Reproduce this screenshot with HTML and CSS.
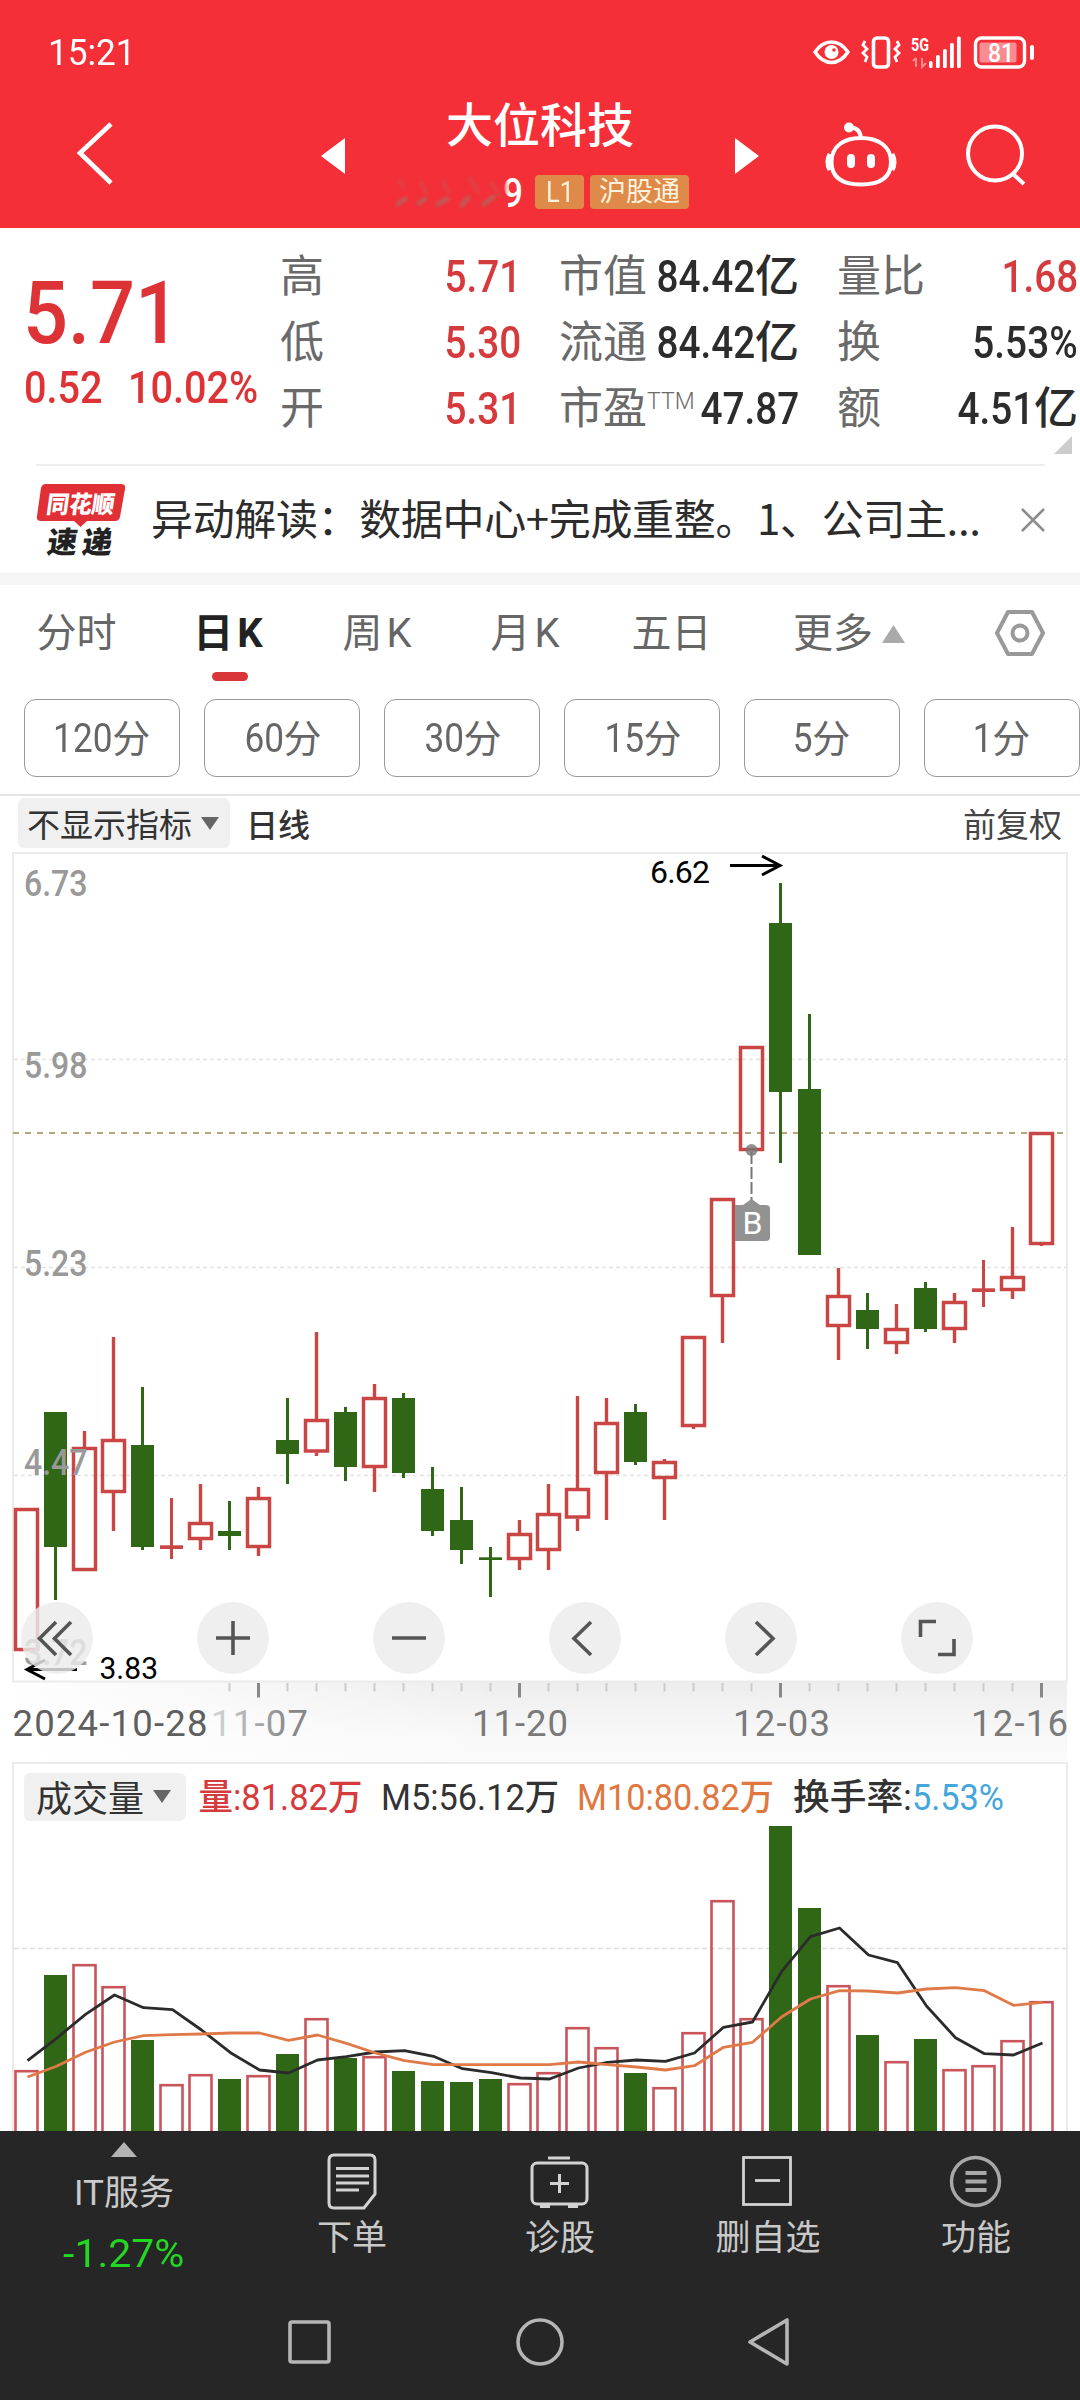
FILE: index.html
```html
<!DOCTYPE html>
<html lang="zh-CN">
<head>
<meta charset="utf-8">
<title>大位科技</title>
<link rel="stylesheet" href="styles.css">
</head>
<body>
<div class="phone">
  <header class="head">
    <div class="status">
      <span class="clock n">15:21</span>
      <svg class="status-icons" width="224" height="40" viewBox="812 32 224 40">
        <g fill="none" stroke="#fff" stroke-width="3.6">
          <path d="M815 52Q822 42 831.500 42T848 52Q841 62.500 831.500 62.500T815 52Z" stroke-linejoin="round"/>
          <rect x="873.500" y="38" width="15" height="29" rx="3.500"/>
          <path d="M865 41l-2 4 4 4-4 4 4 4-2 5M897 41l2 4-4 4 4 4-4 4 2 5" stroke-width="2.800"/>
          <rect x="975.500" y="38" width="49" height="29" rx="6" stroke-width="3.400"/>
        </g>
        <circle cx="831.500" cy="52" r="7" fill="#fff"/><circle cx="834" cy="50" r="1.800" fill="#f42f38"/>
        <g fill="#fff">
          <rect x="929" y="61" width="3.500" height="7" rx="1.500"/><rect x="936" y="55" width="3.800" height="13" rx="1.500"/><rect x="943" y="49" width="3.800" height="19" rx="1.500"/><rect x="950" y="43" width="3.800" height="25" rx="1.500"/><rect x="957" y="36.500" width="3.800" height="31.500" rx="1.500"/>
          <rect x="1030" y="45" width="4" height="15" rx="2"/>
        </g>
        <rect x="979.500" y="42.500" width="37" height="20" rx="2" fill="#fff" opacity=".45"/>
        <path d="M916 58v9M913 61l3-3M922 58v9l4-4" stroke="#fff" opacity=".45" stroke-width="2" fill="none"/>
        <text x="911" y="50.500" font-size="18.500" textLength="18" lengthAdjust="spacingAndGlyphs" class="st b">5G</text>
        <text x="988" y="61.500" font-size="25" textLength="26" lengthAdjust="spacingAndGlyphs" class="st m">81</text>
      </svg>
    </div>
    <div class="nav">
      <svg width="40" height="68" viewBox="74 119 40 68"><path d="M111 124L80 153L111 183" fill="none" stroke="#fff" stroke-width="4.600"/></svg>
      <svg class="prev" width="24" height="36" viewBox="0 0 24 36"><path d="M24 0V36L0 18Z" fill="#fff"/></svg>
      <div class="title">
        <h1>大位科技</h1>
        <div class="code">
          <svg width="140" height="52" viewBox="392 166 140 52">
            <g fill="none" stroke="#b8635c" stroke-width="5" stroke-linecap="round" class="smudge"><path d="M398 204l7-5M419 203l6-4M438 204l9-5M462 205l6-7M484 204l9-7" opacity=".8"/><path d="M400 181l4 6M421 183l5 9M444 182l4 10M470 179l8 12M492 184l8 12" opacity=".3"/></g>
            <text x="503" y="207" font-size="40" textLength="20" lengthAdjust="spacingAndGlyphs" class="st m">9</text>
            <path d="M498 178h9v20h-5z" fill="#f42f38" opacity=".6" class="smudge"/>
          </svg>
          <span class="tag l1"><span class="n">L1</span></span><span class="tag">沪股通</span>
        </div>
      </div>
      <svg class="next" width="24" height="36" viewBox="0 0 24 36"><path d="M0 0V36L24 18Z" fill="#fff"/></svg>
      <svg class="robot" width="72" height="66" viewBox="825 121 72 66">
        <g fill="none" stroke="#fff" stroke-width="4"><path d="M861 138C878 138 891 146 891 162C891 178 879 184.500 861 184.500S831.500 178 831.500 162C831.500 146 844 138 861 138ZM849 127.500Q860 127 861 138"/><path d="M830 154Q826 162 830 170M892 154Q896 162 892 170" stroke-width="5"/></g>
        <circle cx="849" cy="127.500" r="5" fill="#fff"/><rect x="847" y="154" width="8" height="14" rx="4" fill="#fff"/><rect x="867" y="154" width="8" height="14" rx="4" fill="#fff"/>
      </svg>
      <svg width="64" height="64" viewBox="964 123 64 64"><g fill="none" stroke="#fff" stroke-width="4"><circle cx="995" cy="154.500" r="27"/><path d="M1013 175L1024 185"/></g></svg>
    </div>
  </header>

  <section class="quote">
    <div class="last">
      <div class="price"><span class="n">5.71</span></div>
      <div class="chg"><span class="n">0.52</span><span class="n">10.02%</span></div>
    </div>
    <dl class="stats">
      <div class="red"><dt>高</dt><dd><span class="n">5.71</span></dd></div>
      <div><dt>市值</dt><dd><span class="n">84.42</span>亿</dd></div>
      <div class="red"><dt>量比</dt><dd><span class="n">1.68</span></dd></div>
      <div class="red"><dt>低</dt><dd><span class="n">5.30</span></dd></div>
      <div><dt>流通</dt><dd><span class="n">84.42</span>亿</dd></div>
      <div><dt>换</dt><dd><span class="n">5.53%</span></dd></div>
      <div class="red"><dt>开</dt><dd><span class="n">5.31</span></dd></div>
      <div><dt>市盈<sup>TTM</sup></dt><dd><span class="n">47.87</span></dd></div>
      <div><dt>额</dt><dd><span class="n">4.51</span>亿</dd></div>
    </dl>
    <svg class="corner" width="18" height="18" viewBox="0 0 18 18"><path d="M18 0V18H0Z" fill="#ccc"/></svg>
  </section>

  <section class="news">
    <svg width="90" height="90" viewBox="36 474 90 90">
      <path d="M46 483H121Q126 483 125 488L120 516Q119 520 115 520H87L80.500 526L74 520H41Q36 520 37 515L41 487Q42 483 46 483Z" fill="#e03036"/>
      <g class="logo"><text transform="translate(45.500 511.500) skewX(-8)" font-size="24" textLength="68" lengthAdjust="spacingAndGlyphs" fill="#fff">同花顺</text>
      <text transform="translate(46 552) skewX(-8)" font-size="30" fill="#222"><tspan>速</tspan><tspan dx="5">递</tspan></text></g>
    </svg>
    <p>异动解读：数据中心+完成重整。1、公司主...</p>
    <svg width="26" height="26" viewBox="0 0 26 26"><path d="M2 2L24 24M24 2L2 24" stroke="#8d8d8d" stroke-width="2.600"/></svg>
  </section>

  <nav class="tabs">
    <a>分时</a><a class="on">日<i>K</i></a><a>周<i>K</i></a><a>月<i>K</i></a><a>五日</a>
    <a class="more">更多<svg width="23" height="18" viewBox="0 0 23 18"><path d="M11.500 0L23 18H0Z" fill="#aaa"/></svg></a>
    <svg class="gear" width="52" height="48" viewBox="0 0 52 48"><g fill="none" stroke="#999" stroke-width="4" stroke-linejoin="round"><path d="M14 3H38L49 24L38 45H14L3 24Z"/><circle cx="26" cy="24" r="7.500"/></g></svg>
  </nav>
  <div class="pills">
    <span><b class="n">120</b>分</span><span><b class="n">60</b>分</span><span><b class="n">30</b>分</span><span><b class="n">15</b>分</span><span><b class="n">5</b>分</span><span><b class="n">1</b>分</span>
  </div>

  <div class="indicator">
    <span class="select">不显示指标<svg width="18" height="13" viewBox="0 0 18 13"><path d="M0 0H18L9 13Z" fill="#666"/></svg></span>
    <span class="kind">日线</span>
    <span class="adj">前复权</span>
  </div>

  <svg class="chart" width="1080" height="910" viewBox="0 852 1080 910">
    <defs>
      <linearGradient id="axisbg" x1="0" y1="0" x2="0" y2="1"><stop offset="0" stop-color="#ededed"/><stop offset=".65" stop-color="#f8f8f8"/><stop offset="1" stop-color="#fafafa"/></linearGradient>
      <linearGradient id="axisfade" x1="0" y1="0" x2="1" y2="0"><stop offset="0" stop-color="#fff"/><stop offset="1" stop-color="#fff" stop-opacity="0"/></linearGradient>
      <linearGradient id="datefade" gradientUnits="userSpaceOnUse" x1="205" y1="0" x2="310" y2="0"><stop offset="0" stop-color="#ddd"/><stop offset=".8" stop-color="#888"/></linearGradient>
    </defs>
    <rect x="13" y="1682" width="1054" height="80" fill="url(#axisbg)"/>
    <rect x="0" y="1682" width="500" height="80" fill="url(#axisfade)"/>
    <g fill="none" stroke="#ebebeb" stroke-width="2"><rect x="13" y="853" width="1054" height="828.500"/></g>
    <g stroke="#e2e2e2" stroke-width="1.500" stroke-dasharray="4 3"><path d="M14 1059.500H1066M14 1267.500H1066M14 1475.500H1066"/></g>
    <path d="M13 1133H1067" stroke="#b5a57a" stroke-width="2" stroke-dasharray="6 6"/>
    <g class="price-labels">
      <text x="24" y="895.500" textLength="63.500" lengthAdjust="spacingAndGlyphs">6.73</text>
      <text x="24" y="1077.500" textLength="63.500" lengthAdjust="spacingAndGlyphs">5.98</text>
      <text x="24" y="1276" textLength="63.500" lengthAdjust="spacingAndGlyphs">5.23</text>
    </g>
    <g id="ticks"></g>
    <g id="candles"></g>
    <g class="price-labels">
      <text x="24" y="1475" textLength="63.500" lengthAdjust="spacingAndGlyphs">4.47</text>
      <text x="24" y="1665" textLength="63.500" lengthAdjust="spacingAndGlyphs">3.72</text>
    </g>
    <g class="extreme">
      <text x="650" y="882.500" textLength="60" lengthAdjust="spacing">6.62</text>
      <text x="99.500" y="1678.500" textLength="58.500" lengthAdjust="spacingAndGlyphs">3.83</text>
    </g>
    <g fill="none" stroke="#000" stroke-width="3"><path d="M730 865.500H779M762 856L780 865.500L762 875M77 1669.500H28M45 1660L27 1669.500L45 1679"/></g>
    <circle cx="751.500" cy="1150" r="6" fill="#777" opacity=".8"/>
    <path d="M751.500 1152V1200" stroke="#777" stroke-width="2" stroke-dasharray="12 3"/>
    <path d="M751.500 1199L760 1205H766Q770 1205 770 1209V1237Q770 1241 766 1241H735V1205H743Z" fill="#929292"/>
    <text x="742.500" y="1233.500" font-size="31" textLength="20" lengthAdjust="spacingAndGlyphs" class="st">B</text>
    <g fill="#ebebeb" fill-opacity=".82"><circle cx="57" cy="1638" r="36"/><circle cx="233" cy="1638" r="36"/><circle cx="409" cy="1638" r="36"/><circle cx="585" cy="1638" r="36"/><circle cx="761" cy="1638" r="36"/><circle cx="937" cy="1638" r="36"/></g>
    <g fill="none" stroke="#555" stroke-width="3.600"><path d="M56 1622L39.500 1638.500L56 1655M71 1622L54.500 1638.500L71 1655M216 1638H250M233 1621V1655M392 1638H426M591 1622L574 1638.500L591 1655M756 1622L773 1638.500L756 1655M920.500 1637V1621.500H936M938 1654.500H954V1639"/></g>
    <g class="dates">
      <text class="first" x="12.500" y="1736" textLength="195" lengthAdjust="spacing">2024-10-28</text>
      <text class="faded" x="211" y="1736" textLength="97" lengthAdjust="spacing">11-07</text>
      <text x="472" y="1736" textLength="96" lengthAdjust="spacing">11-20</text>
      <text x="733" y="1736" textLength="97" lengthAdjust="spacing">12-03</text>
      <text x="971" y="1736" textLength="97" lengthAdjust="spacing">12-16</text>
    </g>
  </svg>

  <section class="volume">
    <div class="vol-head">
      <span class="select">成交量<svg width="18" height="13" viewBox="0 0 18 13"><path d="M0 0H18L9 13Z" fill="#666"/></svg></span>
      <svg width="890" height="48" viewBox="190 1773 890 48">
        <text x="198.500" y="1809.500" textLength="164" lengthAdjust="spacingAndGlyphs" fill="#d53a3c">量:81.82万</text>
        <text x="381" y="1809.500" textLength="178" lengthAdjust="spacingAndGlyphs" fill="#333">M5:56.12万</text>
        <text x="577" y="1809.500" textLength="197" lengthAdjust="spacingAndGlyphs" fill="#e0773f">M10:80.82万</text>
        <text x="793" y="1809.500" textLength="119" lengthAdjust="spacingAndGlyphs" fill="#333">换手率:</text>
        <text x="912" y="1809.500" textLength="92" lengthAdjust="spacingAndGlyphs" fill="#45a6dc">5.53%</text>
      </svg>
    </div>
    <svg class="vol-chart" width="1080" height="310" viewBox="0 1821 1080 310">
      <path d="M14 1948.500H1066" stroke="#dcdcdc" stroke-width="1.500" stroke-dasharray="5 3"/>
      <g id="bars"></g>
      <g fill="none" stroke-width="2.800" stroke-linejoin="round"><path id="ma5" stroke="#2b2b2b"/><path id="ma10" stroke="#df7a48"/></g>
    </svg>
  </section>

  <footer class="toolbar">
    <div class="sector"><svg width="26" height="15" viewBox="0 0 26 15"><path d="M13 0L26 15H0Z" fill="#b4b4b4"/></svg><span>IT服务</span><em><span class="n">-1.27%</span></em></div>
    <div><svg width="60" height="60" viewBox="0 0 60 60"><g fill="none" stroke="#d2d2d2" stroke-width="3"><path d="M12 4H48Q53 4 53 9V43L42 57H12Q7 57 7 52V9Q7 4 12 4Z"/><path d="M14 17.500H47M14 25H47M14 32H47M14 39H37"/></g></svg><span>下单</span></div>
    <div><svg width="60" height="60" viewBox="0 0 60 60"><g fill="none" stroke="#d2d2d2" stroke-width="3"><rect x="2" y="12" width="55" height="41" rx="5"/><path d="M18 7H40M29.500 23V42M20 32.500H39M10 55.500H20M38 55.500H48"/></g></svg><span>诊股</span></div>
    <div><svg width="60" height="60" viewBox="0 0 60 60"><g fill="none" stroke="#d2d2d2" stroke-width="2.800"><rect x="5.500" y="6.500" width="47" height="47"/><path d="M17 29.500H42"/></g></svg><span>删自选</span></div>
    <div><svg width="60" height="60" viewBox="0 0 60 60"><g fill="none" stroke="#a8a8a8" stroke-width="3.400"><circle cx="29.500" cy="30.500" r="24"/><path d="M19.500 22H40.500M19.500 30.500H40.500M19.500 39H40.500" stroke-width="4"/></g></svg><span>功能</span></div>
  </footer>
  <div class="sysnav">
    <svg width="506" height="56" viewBox="286 2314 506 56"><g fill="none" stroke="#b5b5b5" stroke-width="3.600" stroke-linejoin="round"><rect x="290" y="2322" width="39" height="40" rx="2"/><circle cx="540" cy="2342" r="22"/><path d="M787 2320V2364L750 2342Z"/></g></svg>
  </div>
</div>
<script src="chart.js"></script>
</body>
</html>
```
FILE: styles.css
```css
* { box-sizing: border-box; margin: 0; padding: 0; }
body { background: #fff; font-family: Roboto, "Noto Sans CJK SC", sans-serif; color: #333; }
.phone { width: 1080px; height: 2400px; overflow: hidden; display: flex; flex-direction: column; }
.phone > * { flex: none; }
svg { display: block; flex: none; }
i, em { font-style: normal; }
.n { display: inline-block; transform: scaleX(.88); transform-origin: 100% 50%; font-weight: 500; white-space: nowrap; }
.st { fill: #fff; }
.m { font-weight: 500; }
.b { font-weight: 700; }

/* header */
.head { height: 228px; background: #f42f38; color: #fff; }
.status { height: 96px; padding: 8px 44px 0 48px; display: flex; align-items: center; justify-content: space-between; }
.clock { font-size: 37px; font-weight: 400; transform: scaleX(.95); transform-origin: 0 50%; }
.nav { height: 132px; display: flex; align-items: flex-start; padding-left: 74px; }
.nav > svg { margin-top: 23px; }
.nav .prev { margin: 42px 0 0 207px; }
.nav .next { margin: 42px 0 0 28px; }
.nav .robot { margin: 25px 67px 0 66px; }
.nav > svg:last-child { margin-top: 26px; }
.title { width: 330px; margin-left: 32px; }
.title h1 { font-size: 47px; line-height: 60px; font-weight: 500; height: 60px; margin-left: 69px; white-space: nowrap; }
.code { display: flex; align-items: center; margin-top: 18px; margin-left: 15px; height: 36px; }
.tag { flex: none; width: 99px; height: 34px; line-height: 34px; border-radius: 4px; background: #e08a49; font-size: 27px; text-align: center; color: #fff3dd; }
.tag.l1 { width: 49px; margin: 0 6px 0 3px; }
.tag .n { transform-origin: 50% 50%; font-weight: 400; font-size: 29px; }
.smudge { filter: blur(1.5px); }

/* quote */
.quote { height: 238px; display: flex; padding-top: 16px; background: linear-gradient(#eee, #eee) 36px 236px / 1009px 2px no-repeat; position: relative; }
.last { width: 280px; color: #dd3336; }
.last .n { transform-origin: 0 50%; }
.price { font-size: 88px; line-height: 88px; padding: 25px 0 0 23px; height: 119px; }
.price .n { transform: scaleX(.9); }
.chg { font-size: 44px; line-height: 50px; display: flex; padding-left: 24px; }
.chg .n { transform: scaleX(.9); }
.chg .n:first-child { width: 104px; }
.stats { flex: 1; display: grid; grid-template-columns: 241px 240px 241px; column-gap: 38px; grid-auto-rows: 66px; font-size: 44px; line-height: 66px; }
.stats > div { display: flex; justify-content: space-between; white-space: nowrap; }
.stats dt { color: #6a6a6a; flex: none; }
.stats dd { color: #2c2c2c; font-weight: 500; display: flex; justify-content: flex-end; width: 0; flex: 1; }
.stats .red dd { color: #d53a3c; }
.stats sup { font-size: 23px; vertical-align: 15px; line-height: 0; font-weight: 300; }
.corner { position: absolute; right: 8px; bottom: 12px; }

/* news */
.news { height: 119px; border-bottom: 12px solid #f5f5f5; display: flex; align-items: center; padding: 0 34px 0 36px; }
.news p { flex: 1; margin: -5px 0 0 25px; font: 42px/60px "Noto Sans CJK SC", sans-serif; letter-spacing: -.35px; color: #2c2c2c; white-space: nowrap; }
.logo { font-family: "Noto Sans CJK SC", sans-serif; font-weight: 900; }

/* tabs */
.tabs { height: 114px; display: grid; grid-template-columns: 155px 155px 148px 148px 145px 200px 1fr; padding-top: 19px; }
.tabs a { height: 78px; line-height: 60px; font-size: 40px; color: #666; text-align: center; position: relative; left: -1px; white-space: nowrap; }
.tabs i { margin-left: 4px; }
.tabs .on { color: #222; font-weight: 700; padding-right: 7px; }
.tabs .on ~ a { padding-right: 12px; }
.tabs .on ~ a.more { padding-right: 2px; }
.tabs .on::after { content: ""; position: absolute; left: 58px; top: 68px; width: 36px; height: 9px; border-radius: 5px; background: #d9363a; }
.tabs .more { display: flex; justify-content: center; gap: 9px; }
.tabs .more svg { margin-top: 21px; }
.gear { margin: 5px 0 0 43px; }
.pills { height: 97px; display: flex; gap: 24px; padding-left: 24px; border-bottom: 2px solid #e4e4e4; }
.pills span { flex: none; width: 156px; height: 78px; line-height: 77px; border: 1.5px solid #999; border-radius: 12px; font-size: 38px; text-align: center; color: #666; }
.pills .n { font-size: 40px; font-weight: 400; margin-left: -4px; }
.pills span:first-child .n { margin-left: -9px; }

/* indicator row */
.indicator { height: 56px; display: flex; align-items: center; padding: 0 18px 2px 18px; font-size: 33px; }
.select { display: flex; align-items: center; justify-content: space-between; background: #f0f0f0; border-radius: 6px; color: #333; white-space: nowrap; }
.indicator .select { width: 212px; height: 50px; padding: 0 11px 0 9px; }
.kind { margin-left: 16px; font-size: 32px; font-weight: 500; }
.adj { margin-left: auto; color: #444; }

/* charts */
.price-labels text { font-size: 36.5px; font-weight: 500; fill: #999; }
.extreme text { font-size: 32px; fill: #000; }
.dates text { font-size: 36.5px; fill: #7a7a7a; }
.dates .first { fill: #5f5f5f; }
.dates .faded { fill: url(#datefade); }
.volume { height: 369px; background: linear-gradient(#ebebeb, #ebebeb) 12px 0 / 1056px 2px no-repeat, linear-gradient(#ebebeb, #ebebeb) 12px 0 / 2px 100% no-repeat, linear-gradient(#ebebeb, #ebebeb) 1066px 0 / 2px 100% no-repeat; }
.vol-head { height: 59px; padding: 11px 0 0 24px; display: flex; gap: 4px; font-size: 36px; font-weight: 450; }
.vol-head .select { width: 162px; height: 48px; padding: 0 15px 2px 12px; font-size: 36px; font-weight: 400; }

/* bottom */
.toolbar { height: 147px; background: #262626; color: #c9c9c9; display: grid; grid-template-columns: 248px repeat(4, 208px); font-size: 35px; line-height: 44px; }
.toolbar div { display: flex; flex-direction: column; align-items: center; }
.toolbar div > svg { margin-top: 20px; }
.toolbar div > span { margin-top: 6px; }
.toolbar .sector > svg { margin-top: 11px; }
.toolbar .sector > span { margin-top: 15px; }
.sector em { color: #22d822; font-size: 39px; margin-top: 16px; }
.sector .n { transform-origin: 50% 50%; transform: scaleX(1.05); font-weight: 400; }
.sysnav { height: 122px; background: #262626; padding: 36px 0 0 286px; }
```
FILE: chart.js
```js
const STEP = 29, X0 = 26.5, GREEN = '#306716', RED = '#c94644';
// colour, high, body top, body bottom, low, volume bar top
const days = [
  ['r',1508,1508,1651,1651,2070],['g',1412,1412,1547,1600,1975],['r',1431,1447,1571,1571,1964],['r',1337,1439,1493,1531,1986],
  ['g',1387,1445,1547,1550,2040],['r',1498,1545.3,1549,1559,2084],['r',1484,1522,1540,1550,2074],['g',1501,1531,1536,1550,2079],
  ['r',1487,1497,1548,1556,2075],['g',1398,1440,1454,1484,2054],['r',1332,1419,1452.5,1456,2018],['g',1407,1412,1467,1481,2058],
  ['r',1384,1397,1468,1492,2056],['g',1393,1398,1473,1478,2071],['g',1467,1489,1531,1536,2081],['g',1487,1520,1550,1564,2082],
  ['g',1547,1557.3,1560,1597,2079],['r',1520,1533,1560,1570,2083],['r',1484,1513,1551,1570,2072],['r',1396,1488,1518.5,1531,2027],
  ['r',1398,1422,1474,1520,2047],['g',1404,1412,1462,1465,2073],['r',1459,1461,1479,1520,2087],['r',1336,1336,1427,1429,2032],
  ['r',1198,1198,1297,1343,1900],['r',1046,1046,1151,1151,2018],['g',883,923,1092,1163,1826],['g',1014,1089,1255,1255,1908],
  ['r',1268,1295,1327,1360,1985],['g',1293,1310,1329,1349,2035],['r',1304,1328,1344,1354,2061],['g',1282,1288,1329,1332,2039],
  ['r',1293,1301,1330,1343,2069],['r',1260,1288.3,1292,1307,2065],['r',1227,1276,1291,1299,2040],['r',1132,1132,1245,1246,2001]
];
const ma5 = [932,865,793,735,773,779,840,908,960,969,930,920,906,902,919,956,968,984,987,954,937,930,934,909,832,816,665,560,534,615,638,768,863,911,915,879];
const ma10 = [981,949,907,876,857,854,852,849,849,871,855,880,909,932,944,944,944,944,944,936,944,951,960,947,892,877,801,747,722,723,729,717,713,722,766,757];

const rect = (x, y, w, h, attrs) => `<rect x="${x}" y="${y}" width="${w}" height="${h}" ${attrs}/>`;
let candles = '', bars = '', ticks = '';
days.forEach(([c, high, top, bottom, low, vol], i) => {
  const x = X0 + i * STEP, color = c === 'g' ? GREEN : RED;
  if (c === 'g' || bottom - top < 6) {
    candles += rect(x - 1.5, high, 3, low - high, `fill="${color}"`);
    candles += rect(x - 11.5, top, 23, bottom - top, `fill="${color}"`);
  } else {
    candles += rect(x - 1.7, high, 3.4, top - high, `fill="${color}"`);
    candles += rect(x - 1.7, bottom, 3.4, low - bottom, `fill="${color}"`);
    candles += rect(x - 11, top + 1.5, 22, bottom - top - 3, `fill="none" stroke="${color}" stroke-width="3.5"`);
  }
  bars += c === 'g'
    ? rect(x - 11.5, vol, 23, 2131 - vol, `fill="${GREEN}"`)
    : rect(x - 11, vol + 1.2, 22, 2140 - vol, 'fill="none" stroke="#c9545a" stroke-width="2.6"');
  if (i >= 7) {
    const major = i % 9 === 8;
    ticks += rect(x - (major ? 1.5 : 1), 1683, major ? 3 : 2, major ? 14.5 : 8.5, `fill="${major ? '#888' : '#ccc'}"`);
  }
});
const line = ys => 'M' + ys.map((v, i) => `${X0 + i * STEP + 1} ${(1750 + v / 3).toFixed(1)}`).join('L');
document.getElementById('candles').innerHTML = candles;
document.getElementById('bars').innerHTML = bars;
document.getElementById('ticks').innerHTML = ticks;
document.getElementById('ma5').setAttribute('d', line(ma5));
document.getElementById('ma10').setAttribute('d', line(ma10));
```
